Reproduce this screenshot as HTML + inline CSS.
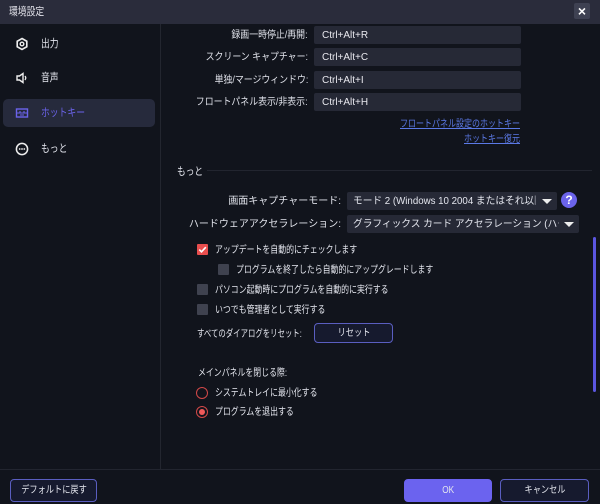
<!DOCTYPE html>
<html><head><meta charset="utf-8"><style>
*{box-sizing:border-box;margin:0;padding:0}
body{width:600px;height:504px;background:#11141c;font-family:"Liberation Sans","Noto Sans CJK JP",sans-serif;color:#e4e6ee;font-size:10px;line-height:20px;position:relative;overflow:hidden}
.abs{position:absolute;white-space:nowrap}
.n{transform:scaleX(.79);transform-origin:left center}
.nr{transform:scaleX(.89);transform-origin:right center}
.title{left:0;top:0;width:600px;height:24px;background:#2a2c3b}
.title span{position:absolute;left:9px;top:4px;font-size:11px;line-height:16px;display:inline-block;transform:scaleX(.8);transform-origin:left;color:#e0e0e8}
.close{right:10px;top:3px;width:16px;height:16px;background:#3e4152;border-radius:2px;color:#fff;font-size:14px;line-height:16px;text-align:center;font-weight:bold}
.side{left:0;top:24px;width:161px;height:445px;border-right:1px solid #23262f}
.nav{left:3px;width:152px;height:28px;border-radius:5px}
.nav .t{position:absolute;left:38px;top:6px;font-size:11px;line-height:16px;transform:scaleX(.8);transform-origin:left}
.nav svg{position:absolute;left:12px;top:7px}
.lbl{font-size:10px;color:#e0e2ea}
.field{left:314px;width:207px;height:18px;background:#262936;border-radius:2px;padding:1px 8px 0;line-height:18px;font-size:10px;color:#e8e8ee}
.link{color:#5b79e6;text-decoration:underline;font-size:10px}
.sel{background:#262936;border-radius:2px;height:18px;padding:2px 6px 0;font-size:10px;overflow:hidden}
.sel span{display:block;line-height:16px;transform:scaleX(.97);transform-origin:left;overflow:hidden}
.tri{position:absolute;right:5px;top:7px;width:0;height:0;border-left:5px solid transparent;border-right:5px solid transparent;border-top:5px solid #eee}
.cb{width:11px;height:11px;background:#3f424f;border-radius:1px}
.btn{height:22px;border:1px solid #5a5ec0;border-radius:4px;background:#161a2e;text-align:center;line-height:21px;font-size:10px}
.btn span{display:inline-block;transform:scaleX(.82)}
</style></head><body>
<div class="abs title"><span>環境設定</span></div>
<div class="abs close">×</div>
<div class="abs side"></div>

<div class="abs nav" style="top:30px"><svg width="14" height="14" viewBox="0 0 14 14"><path d="M7 1.5l4.8 2.75v5.5L7 12.5 2.2 9.75v-5.5z" fill="none" stroke="#eee" stroke-width="1.6"/><circle cx="7" cy="7" r="1.8" fill="none" stroke="#eee" stroke-width="1.4"/></svg><span class="t">出力</span></div>
<div class="abs nav" style="top:64px"><svg width="14" height="14" viewBox="0 0 14 14"><path d="M2 5h2.5L8 2.5v9L4.5 9H2z" fill="none" stroke="#eee" stroke-width="1.4"/><path d="M10 5q1.5 2 0 4" fill="none" stroke="#eee" stroke-width="1.3"/></svg><span class="t">音声</span></div>
<div class="abs nav" style="top:99px;background:#262a3c"><svg width="14" height="14" viewBox="0 0 14 14"><rect x="1.5" y="3" width="11" height="8" fill="none" stroke="#6b63ea" stroke-width="1.4"/><path d="M1.5 7h11M5 5v2M9 5v2M5 9h4" stroke="#6b63ea" stroke-width="1.1"/></svg><span class="t" style="color:#6b63ea">ホットキー</span></div>
<div class="abs nav" style="top:135px"><svg width="14" height="14" viewBox="0 0 14 14"><circle cx="7" cy="7" r="5.6" fill="none" stroke="#eee" stroke-width="1.5"/><circle cx="4.7" cy="7" r=".9" fill="#eee"/><circle cx="7" cy="7" r=".9" fill="#eee"/><circle cx="9.3" cy="7" r=".9" fill="#eee"/></svg><span class="t">もっと</span></div>

<div class="abs lbl nr" style="right:292px;top:26px">録画一時停止/再開:</div>
<div class="abs field" style="top:26px">Ctrl+Alt+R</div>
<div class="abs lbl nr" style="right:292px;top:48px">スクリーン キャプチャー:</div>
<div class="abs field" style="top:48px">Ctrl+Alt+C</div>
<div class="abs lbl nr" style="right:292px;top:71px">単独/マージウィンドウ:</div>
<div class="abs field" style="top:71px">Ctrl+Alt+I</div>
<div class="abs lbl nr" style="right:292px;top:93px">フロートパネル表示/非表示:</div>
<div class="abs field" style="top:93px">Ctrl+Alt+H</div>
<div class="abs link" style="right:80px;top:115px;transform:scaleX(.8);transform-origin:right">フロートパネル設定のホットキー</div>
<div class="abs link" style="right:80px;top:130px;transform:scaleX(.8);transform-origin:right">ホットキー復元</div>

<div class="abs n" style="left:177px;top:162px;font-size:11px">もっと</div>
<div class="abs" style="left:207px;top:170px;width:385px;height:1px;background:#22252f"></div>

<div class="abs lbl" style="right:259px;top:192px">画面キャプチャーモード:</div>
<div class="abs sel" style="left:347px;top:192px;width:210px"><span style="width:188px">モード 2 (Windows 10 2004 またはそれ以降</span><div class="tri"></div></div>
<div class="abs" style="left:561px;top:192px;width:16px;height:16px;border-radius:50%;background:#6b63ea;color:#fff;font-weight:bold;font-size:12px;text-align:center;line-height:16px">?</div>
<div class="abs lbl" style="right:259px;top:215px">ハードウェアアクセラレーション:</div>
<div class="abs sel" style="left:347px;top:215px;width:232px"><span style="width:212px">グラフィックス カード アクセラレーション (ハードウェア :</span><div class="tri"></div></div>

<div class="abs cb" style="left:197px;top:244px;background:#e94e4e"><svg width="11" height="11" viewBox="0 0 11 11" style="display:block"><path d="M2.3 5.6l2.2 2.2 4.3-4.6" fill="none" stroke="#fff" stroke-width="1.6"/></svg></div>
<div class="abs n" style="left:215px;top:241px">アップデートを自動的にチェックします</div>
<div class="abs cb" style="left:218px;top:264px"></div>
<div class="abs n" style="left:236px;top:261px">プログラムを終了したら自動的にアップグレードします</div>
<div class="abs cb" style="left:197px;top:284px"></div>
<div class="abs n" style="left:215px;top:281px">パソコン起動時にプログラムを自動的に実行する</div>
<div class="abs cb" style="left:197px;top:304px"></div>
<div class="abs n" style="left:215px;top:301px">いつでも管理者として実行する</div>
<div class="abs n" style="left:197px;top:325px;transform:scaleX(.74)">すべてのダイアログをリセット:</div>
<div class="abs btn" style="left:314px;top:323px;width:79px;height:20px;line-height:19px"><span>リセット</span></div>

<div class="abs n" style="left:198px;top:364px">メインパネルを閉じる際:</div>
<div class="abs" style="left:196px;top:387px;width:12px;height:12px;border-radius:50%;border:1.5px solid #d24848"></div>
<div class="abs n" style="left:215px;top:384px">システムトレイに最小化する</div>
<div class="abs" style="left:196px;top:406px;width:12px;height:12px;border-radius:50%;border:1.5px solid #d24848;background:#11141c"><div style="position:absolute;left:1.5px;top:1.5px;width:6px;height:6px;border-radius:50%;background:#f05a5a"></div></div>
<div class="abs n" style="left:215px;top:403px">プログラムを退出する</div>

<div class="abs" style="left:593px;top:237px;width:3px;height:155px;border-radius:2px;background:#5b56e0"></div>
<div class="abs" style="left:0;top:469px;width:600px;height:1px;background:#22252f"></div>
<div class="abs btn" style="left:10px;top:479px;width:87px;height:23px"><span>デフォルトに戻す</span></div>
<div class="abs btn" style="left:404px;top:479px;width:88px;height:23px;background:#6b63ef;border-color:#6b63ef"><span>OK</span></div>
<div class="abs btn" style="left:500px;top:479px;width:89px;height:23px"><span>キャンセル</span></div>
</body></html>
